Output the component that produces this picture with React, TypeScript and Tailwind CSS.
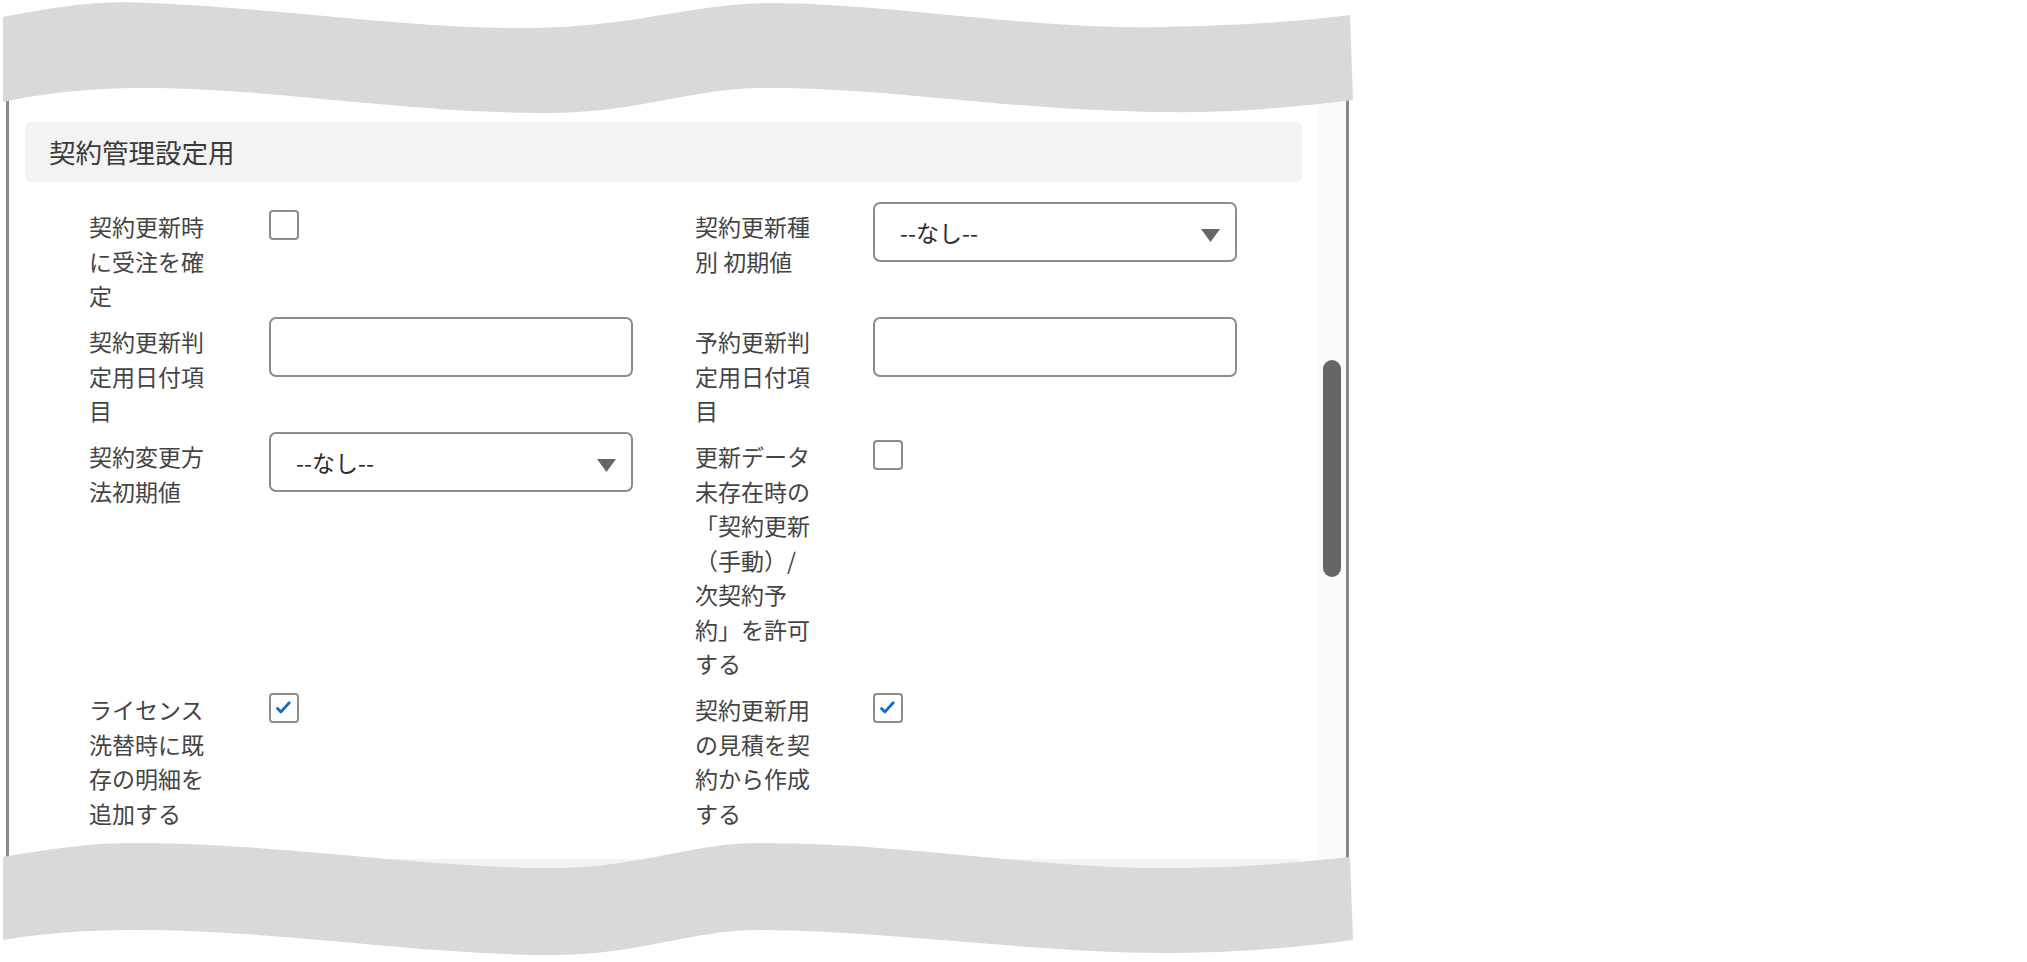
import React from 'react';

const font = { fontFamily: '"Noto Sans CJK JP", "Noto Sans", sans-serif' };

type Field =
  | { kind: 'checkbox'; checked?: boolean }
  | { kind: 'input' }
  | { kind: 'select'; value: string };

interface RowDef {
  left: { label: string[]; field: Field };
  right: { label: string[]; field: Field };
}

const rows: RowDef[] = [
  {
    left: { label: ['契約更新時', 'に受注を確', '定'], field: { kind: 'checkbox' } },
    right: { label: ['契約更新種', '別 初期値'], field: { kind: 'select', value: '--なし--' } },
  },
  {
    left: { label: ['契約更新判', '定用日付項', '目'], field: { kind: 'input' } },
    right: { label: ['予約更新判', '定用日付項', '目'], field: { kind: 'input' } },
  },
  {
    left: { label: ['契約変更方', '法初期値'], field: { kind: 'select', value: '--なし--' } },
    right: {
      label: ['更新データ', '未存在時の', '「契約更新', '（手動）/', '次契約予', '約」を許可', 'する'],
      field: { kind: 'checkbox' },
    },
  },
  {
    left: { label: ['ライセンス', '洗替時に既', '存の明細を', '追加する'], field: { kind: 'checkbox', checked: true } },
    right: { label: ['契約更新用', 'の見積を契', '約から作成', 'する'], field: { kind: 'checkbox', checked: true } },
  },
];

function Label({ lines, width }: { lines: string[]; width: string }) {
  return (
    <div className={`${width} shrink-0 pt-[7px] pb-[4.5px] text-[23px] leading-[34.5px] text-[#444444]`}>
      {lines.map((l, i) => (
        <div key={i} className="whitespace-nowrap">
          {l}
        </div>
      ))}
    </div>
  );
}

function Control({ field }: { field: Field }) {
  if (field.kind === 'checkbox') {
    return (
      <div className="mt-[8px] w-[30px] h-[30px] rounded-[4px] border-2 border-[#8c8c8c] bg-white flex items-center justify-center">
        {field.checked && (
          <svg width="30" height="30" viewBox="0 0 30 30">
            <polyline
              points="7.5,15.5 11.5,19.5 21,9"
              fill="none"
              stroke="#0b6cc4"
              strokeWidth="3.2"
              strokeLinecap="round"
              strokeLinejoin="round"
            />
          </svg>
        )}
      </div>
    );
  }
  if (field.kind === 'input') {
    return (
      <input
        type="text"
        readOnly
        className="block w-full h-[60px] rounded-[7px] border-2 border-[#8c8c8c] bg-white outline-none"
      />
    );
  }
  return (
    <div className="w-full h-[60px] rounded-[7px] border-2 border-[#8c8c8c] bg-white flex items-center justify-between pl-[25px] pr-[15px]">
      <span className="text-[23px] leading-none text-[#2b2b2b]">{field.value}</span>
      <svg width="19" height="13" viewBox="0 0 19 13" className="mt-[6px]">
        <polygon points="0,0 19,0 9.5,13" fill="#666666" />
      </svg>
    </div>
  );
}

export default function App() {
  return (
    <div className="relative w-[2027px] h-[962px] overflow-hidden bg-white pt-[40px]" style={font}>
      <div className="ml-[6px] w-[1343px] h-[890px] border-x-[3px] border-[#8a8a8a] bg-white flex overflow-hidden">
        <div className="flex-1 px-[16px] pt-[82px]">
          <div className="h-[60px] rounded-[6px] bg-[#f3f3f3] flex items-center pl-[24px]">
            <span className="text-[26.5px] text-[#3a3a3a]">契約管理設定用</span>
          </div>

          <div className="mt-[20px]">
            {rows.map((r, i) => (
              <div key={i} className="flex items-start pl-[64px]">
                <Label lines={r.left.label} width="w-[180px]" />
                <div className="w-[364px] shrink-0">
                  <Control field={r.left.field} />
                </div>
                <div className="w-[62px] shrink-0" />
                <Label lines={r.right.label} width="w-[178px]" />
                <div className="w-[364px] shrink-0">
                  <Control field={r.right.field} />
                </div>
              </div>
            ))}
          </div>

          <div className="mt-[24.5px] h-[60px] rounded-[6px] bg-[#f3f3f3]" />
        </div>

        <div className="w-[28px] shrink-0 bg-[#fafafa] pt-[320px] pl-[5px]">
          <div className="w-[18px] h-[217px] rounded-full bg-[#666666]" />
        </div>
      </div>

      {/* torn edge, top */}
      <svg className="absolute left-0 top-0" width="1360" height="120" viewBox="0 0 1360 120">
        <path
          d="M3,17 C60,6 100,0 152,3 C300,10 420,30 536,28 C640,26 700,2 777,3 C900,5 1040,30 1161,27 C1260,25 1310,20 1350,15 L1353,100 C1290,108 1230,113 1161,112 C1000,110 880,86 759,88 C680,90 640,114 536,113 C400,112 250,86 134,88 C80,89 40,94 3,102 Z"
          fill="#d9d9d9"
        />
      </svg>

      {/* torn edge, bottom */}
      <svg className="absolute left-0 top-[830px]" width="1360" height="132" viewBox="0 830 1360 132">
        <path
          d="M3,857 C50,849 90,843 134,843 C280,843 420,868 553,868 C640,868 690,843 759,843 C900,843 1040,868 1160,868 C1250,868 1300,862 1350,857 L1353,940 C1300,947 1240,953 1160,953 C1040,953 880,930 759,930 C690,930 640,955 553,955 C420,955 280,930 134,930 C80,930 40,934 3,940 Z"
          fill="#d9d9d9"
        />
      </svg>
    </div>
  );
}
